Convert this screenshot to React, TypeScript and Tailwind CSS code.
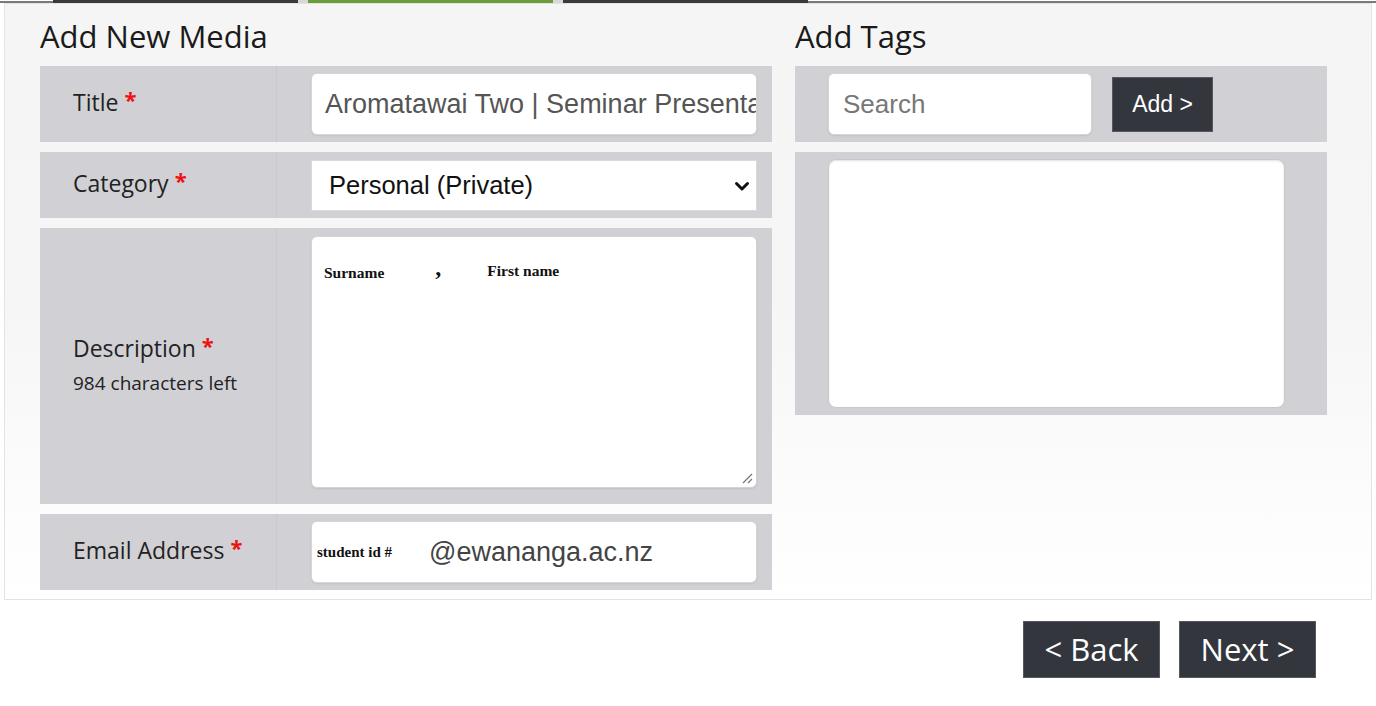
import React from 'react'

const labelFont = "font-['Open_Sans',sans-serif]"
const arial = "font-['Liberation_Sans',Arial,sans-serif]"
const serif = "font-['Liberation_Serif','Times_New_Roman',serif]"

function TabStrip() {
  return (
    <div className="flex h-[3px] items-start">
      <div className="mt-[1px] h-[2px] w-[53px] bg-[#7a7a7a]" />
      <div className="h-[3px] w-[245px] bg-[#3a3a3a]" />
      <div className="h-[3px] w-[10px] bg-[#d8d8d8]" />
      <div className="h-[3px] w-[245px] bg-[#6b9c3a]" />
      <div className="h-[3px] w-[10px] bg-[#d8d8d8]" />
      <div className="h-[3px] w-[245px] bg-[#3a3a3a]" />
      <div className="mt-[1px] h-[2px] flex-1 bg-[#7a7a7a]" />
    </div>
  )
}

function Req() {
  return <span className="relative top-[-3px] ml-[6px] text-[22px] font-bold leading-none text-[#ee1111]">*</span>
}

interface RowProps {
  label: React.ReactNode
  className: string
  children: React.ReactNode
}

function FormRow({ label, className, children }: RowProps) {
  return (
    <div className={`flex bg-[#d1d1d5] ${className}`}>
      <div className="flex w-[237px] shrink-0 items-center border-r border-[#c9c9cd] pb-[4px] pl-[33px]">{label}</div>
      <div className="min-w-0 flex-1 pl-[34px] pr-[15px]">{children}</div>
    </div>
  )
}

function Chevron() {
  return (
    <svg width="16" height="12" viewBox="0 0 16 12" fill="none">
      <path d="M2.5 3.5 L8 9 L13.5 3.5" stroke="#111" strokeWidth="3" strokeLinecap="round" strokeLinejoin="round" />
    </svg>
  )
}

function ResizeHandle() {
  return (
    <svg width="12" height="12" viewBox="0 0 12 12" className="absolute bottom-[3px] right-[3px]">
      <path d="M11 2 L2 11 M11 7 L7 11" stroke="#777" strokeWidth="1.2" />
    </svg>
  )
}

export default function App() {
  return (
    <div className={`min-h-[706px] bg-white text-[#222] ${labelFont}`}>
      <TabStrip />

      <div className="mx-1 border border-[#e3e3e3] bg-gradient-to-b from-[#f5f5f5] via-[#f6f6f6] to-white pb-[9px] pl-[35px] pr-[44px]">
        <div className="flex gap-[23px]">
          {/* Media details */}
          <div className="w-[732px]">
            <h2 className="flex h-[62px] items-center pt-[2px] text-[31px] font-normal text-[#1a1a1a]">Add New Media</h2>

            <div className="flex flex-col gap-[10px]">
              <FormRow
                className="h-[76px]"
                label={<span className="text-[23px]">Title<Req /></span>}
              >
                <div className="mt-[7px] flex h-[62px] items-center overflow-hidden whitespace-nowrap rounded-[6px] border border-[#d6d6d6] bg-white pl-[13px] shadow-[0_1px_2px_rgba(0,0,0,0.08)]">
                  <span className={`${arial} text-[27px] text-[#555]`}>Aromatawai Two | Seminar Presentation</span>
                </div>
              </FormRow>

              <FormRow
                className="h-[66px]"
                label={<span className="text-[23px]">Category<Req /></span>}
              >
                <div className="mt-[8px] flex h-[51px] items-center justify-between border border-[#d9d9d9] bg-white pl-[17px] pr-[6px]">
                  <span className={`${arial} text-[25.5px] text-[#111]`}>Personal (Private)</span>
                  <Chevron />
                </div>
              </FormRow>

              <FormRow
                className="h-[276px]"
                label={
                  <div>
                    <div className="text-[23px]">Description<Req /></div>
                    <div className="mt-[3px] text-[19px] text-[#222]">984 characters left</div>
                  </div>
                }
              >
                <div className="relative mt-[8px] h-[252px] rounded-[6px] border border-[#d3d3d3] bg-white shadow-[0_1px_2px_rgba(0,0,0,0.08)]">
                  <div className={`flex items-start ${serif} font-bold text-[#111]`}>
                    <span className="ml-[12px] mt-[24px] text-[15.5px]">Surname</span>
                    <span className="ml-[51px] mt-[18px] text-[24px] leading-none">,</span>
                    <span className="ml-[46px] mt-[22px] text-[15.5px]">First name</span>
                  </div>
                  <ResizeHandle />
                </div>
              </FormRow>

              <FormRow
                className="h-[76px]"
                label={<span className="text-[23px]">Email Address<Req /></span>}
              >
                <div className="mt-[7px] flex h-[62px] items-center rounded-[6px] border border-[#d6d6d6] bg-white pl-[5px] shadow-[0_1px_2px_rgba(0,0,0,0.08)]">
                  <span className={`${serif} text-[15px] font-bold text-[#111]`}>student id #</span>
                  <span className={`${arial} ml-[37px] text-[27px] text-[#444]`}>@ewananga.ac.nz</span>
                </div>
              </FormRow>
            </div>
          </div>

          {/* Tags */}
          <div className="w-[532px]">
            <h2 className="flex h-[62px] items-center pt-[2px] text-[31px] font-normal text-[#1a1a1a]">Add Tags</h2>

            <div className="flex flex-col gap-[10px]">
              <div className="flex h-[76px] items-center gap-[20px] bg-[#d1d1d5] pl-[33px]">
                <div className="flex h-[62px] w-[264px] items-center rounded-[6px] border border-[#d6d6d6] bg-white pl-[14px] shadow-[0_1px_2px_rgba(0,0,0,0.08)]">
                  <span className={`${arial} text-[26px] text-[#777]`}>Search</span>
                </div>
                <button className={`${arial} h-[55px] w-[101px] border border-[#55585e] bg-[#33363d] text-[23px] text-white`}>
                  Add &gt;
                </button>
              </div>

              <div className="h-[263px] bg-[#d1d1d5] pl-[33px] pt-[7px]">
                <div className="h-[249px] w-[457px] rounded-[8px] border border-[#c8c8c8] bg-white shadow-[inset_0_1px_2px_rgba(0,0,0,0.12)]" />
              </div>
            </div>
          </div>
        </div>
      </div>

      <div className="mt-[21px] flex justify-end gap-[19px] pr-[60px]">
        <button className="h-[57px] w-[137px] border border-[#55585e] bg-[#33363d] text-[31px] text-white">&lt; Back</button>
        <button className="h-[57px] w-[137px] border border-[#55585e] bg-[#33363d] text-[31px] text-white">Next &gt;</button>
      </div>
    </div>
  )
}
